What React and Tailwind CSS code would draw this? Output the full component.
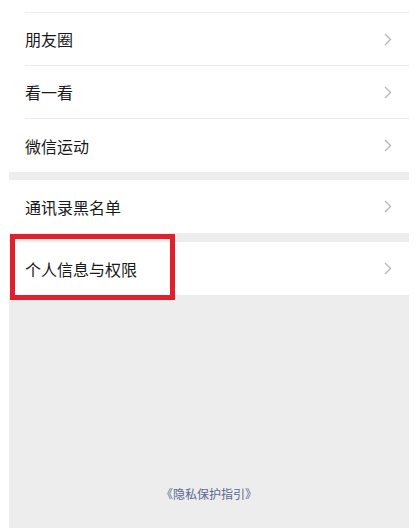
import React from 'react';

const Chevron = () => (
  <svg width="8" height="13" viewBox="0 0 8 13" fill="none" className="shrink-0">
    <path d="M1 1l5.5 5.5L1 12" stroke="#b5b5b5" strokeWidth="1.3" />
  </svg>
);

const Row = ({ label, line = true, h = 'h-[53px]' }) => (
  <div className={`bg-white pl-4 ${h}`}>
    <div className={`flex h-full items-center justify-between pr-[17px] ${line ? 'border-b border-[#ececec]' : ''}`}>
      <span className="text-[16px] text-[#191919]">{label}</span>
      {label && <Chevron />}
    </div>
  </div>
);

export default function App() {
  return (
    <div
      className="relative h-[528px] w-[416px] overflow-hidden bg-white pl-[9px] pr-[7px]"
      style={{ fontFamily: '"Noto Sans CJK SC", "Noto Sans", sans-serif' }}
    >
      <div className="flex h-full flex-col bg-[#ededed]">
        <Row label="" h="h-[13px]" />
        <Row label="朋友圈" />
        <Row label="看一看" />
        <Row label="微信运动" line={false} />
        <div className="h-[8px]" />
        <Row label="通讯录黑名单" line={false} />
        <div className="h-[9px]" />
        <Row label="个人信息与权限" line={false} />
        <div className="flex flex-1 items-end justify-center pb-[25px]">
          <span className="text-[12px] text-[#59698f]">《隐私保护指引》</span>
        </div>
      </div>
      <div className="absolute left-[10px] top-[234px] h-[66px] w-[165px] border-[5px] border-[#e21f2c]" />
    </div>
  );
}
